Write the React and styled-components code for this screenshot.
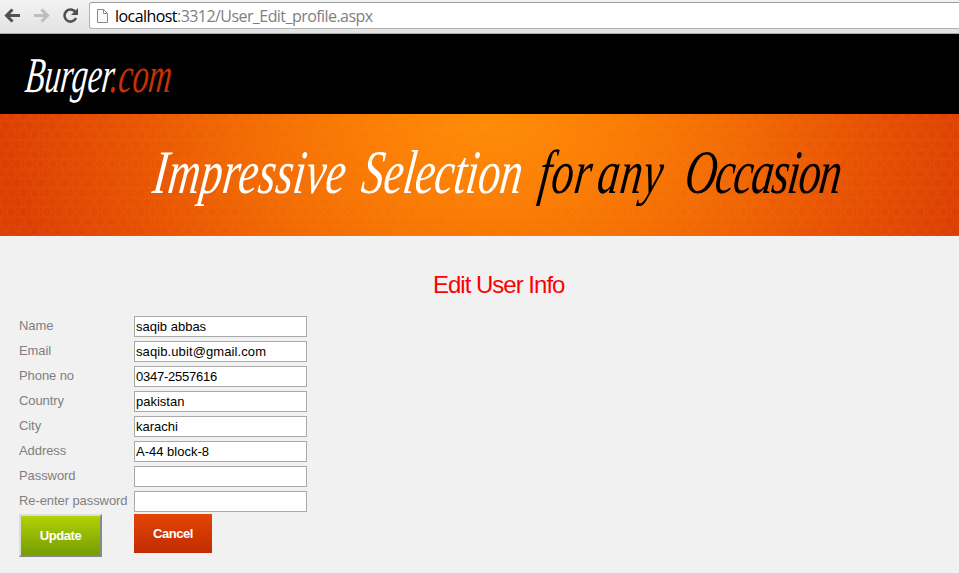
import React from "react";
import styled, { createGlobalStyle } from "styled-components";

const Global = createGlobalStyle`
  * { box-sizing: border-box; }
  body { margin: 0; background: #f1f1f1; overflow: hidden; font-family: "Liberation Sans", Arial, sans-serif; }
`;

const Page = styled.div`
  display: flex;
  flex-direction: column;
  height: 573px;
  overflow: hidden;
`;

const Toolbar = styled.div`
  display: flex;
  align-items: flex-start;
  height: 34px;
  padding-top: 2px;
  background: linear-gradient(#f3f3f3, #e2e2e2);
  border-bottom: 1px solid #a9a9a9;
`;

const NavIcons = styled.svg`
  flex: none;
  width: 89px;
  height: 28px;
`;

const AddressBar = styled.div`
  flex: 1;
  display: flex;
  align-items: center;
  height: 27px;
  padding-left: 6px;
  background: #fff;
  border: 1px solid #b2b2b2;
  border-top-color: #9d9d9d;
  border-right: 0;
  border-radius: 3px 0 0 3px;
  font: 16px "Open Sans", sans-serif;
  color: #808080;
`;

const PageIcon = styled.svg`
  width: 13px;
  height: 16px;
  margin-right: 6px;
`;

const Url = styled.span`
  white-space: nowrap;
  letter-spacing: -0.56px;
  line-height: 22px;
`;

const Host = styled.span`
  color: #000;
`;

const Header = styled.header`
  height: 80px;
  flex: none;
  background: #000;
  padding: 11px 0 0 26px;
`;

const Logo = styled.div`
  width: max-content;
  font: italic 50px/60px "Liberation Serif", serif;
  color: #fff;
  white-space: nowrap;
  transform: scaleX(0.635) skewX(-10deg);
  transform-origin: left;
`;

const LogoSuffix = styled.span`
  color: #c93003;
`;

const Banner = styled.section`
  position: relative;
  flex: none;
  height: 122px;
  padding: 23px 0 0 154px;
  background: radial-gradient(ellipse 490px 360px at 490px 0, #ff8c07 0%, #fb7d05 25%, #f26a04 50%, #e75203 75%, #dc3e03 100%);
`;

const Pattern = styled.svg`
  position: absolute;
  inset: 0;
  width: 100%;
  height: 100%;
`;

const Slogan = styled.h1`
  position: relative;
  display: grid;
  grid-template-columns: 294px 249px 83px 123px 240px;
  width: max-content;
  margin: 0;
  font: italic 62px/70px "Liberation Serif", serif;
  transform: scaleX(0.71);
  transform-origin: left;
`;

const Word = styled.span`
  color: ${(p) => (p.$dark ? "#000" : "#fff")};
  letter-spacing: ${(p) => p.$tracking || 0}px;
  transform: skewX(-10deg);
`;

const Title = styled.h2`
  margin: 32px 0 14px 433px;
  font-size: 24px;
  font-weight: 400;
  line-height: 34px;
  letter-spacing: -1px;
  color: #f00;
`;

const Form = styled.div`
  margin-left: 19px;
  width: 288px;
`;

const Row = styled.label`
  display: grid;
  grid-template-columns: 115px 173px;
  height: 25px;
  font-size: 13px;
  line-height: 19px;
  letter-spacing: -0.08px;
  color: #808080;
  white-space: nowrap;
`;

const Field = styled.input`
  width: 173px;
  height: 21px;
  padding: 1px;
  border: 1px solid #a9a9a9;
  border-radius: 0;
  background: #fff;
  color: #000;
  font: 13px "Liberation Sans", Arial, sans-serif;
  letter-spacing: ${(p) => p.$tracking || 0}px;
  outline: 0;
`;

const Actions = styled.div`
  display: grid;
  grid-template-columns: 115px 173px;
  align-items: start;
  margin-top: -2px;
`;

const Button = styled.button`
  width: ${(p) => (p.$raised ? "83px" : "78px")};
  height: ${(p) => (p.$raised ? "43px" : "39px")};
  padding: 0;
  border: ${(p) => (p.$raised ? "2px solid" : "0")};
  border-color: #ddd #888 #888 #ddd;
  background: ${(p) => (p.$raised ? "linear-gradient(#b1d205, #769d02)" : "linear-gradient(#e44503, #c02c02)")};
  color: #fff;
  font: bold 13px "Liberation Sans", Arial, sans-serif;
  letter-spacing: -0.45px;
`;

const fields = [
  ["Name", "saqib abbas"],
  ["Email", "saqib.ubit@gmail.com", 0.1],
  ["Phone no", "0347-2557616", -0.25],
  ["Country", "pakistan"],
  ["City", "karachi"],
  ["Address", "A-44 block-8"],
  ["Password", ""],
  ["Re-enter password", ""],
];

export default function App() {
  return (
    <Page>
      <Global />
      <Toolbar>
        <NavIcons viewBox="0 2 89 28" fill="none" strokeWidth="3">
          <path d="M20 15.500H7M12.500 9.500L6.500 15.500L12.500 21.500" stroke="#505050" />
          <path d="M34 15.500H47M41.500 9.500L47.500 15.500L41.500 21.500" stroke="#bdbdbd" />
          <path d="M75.500 12.200A6 6 0 1 0 76 18" stroke="#505050" strokeWidth="2.600" />
          <path d="M78 8V15H71Z" fill="#505050" />
        </NavIcons>
        <AddressBar>
          <PageIcon viewBox="0 0 13 16" fill="#fafafa" stroke="#8b8b8b">
            <path d="M1.500 1.500H7.500L11.500 5.500V14.500H1.500Z M7.500 1.500V5.500H11.500" />
          </PageIcon>
          <Url><Host>localhost</Host>:3312/User_Edit_profile.aspx</Url>
        </AddressBar>
      </Toolbar>
      <Header>
        <Logo>Burger<LogoSuffix>.com</LogoSuffix></Logo>
      </Header>
      <Banner>
        <Pattern aria-hidden="true">
          <defs>
            <pattern id="honeycomb" x="448" y="2" width="11.8" height="19.2" patternUnits="userSpaceOnUse">
              <g fill="none" stroke="#ffae24" strokeOpacity=".11">
                <circle cx="5.900" cy="9.600" r="4.700" />
                <circle cx="0" cy="0" r="4.700" />
                <circle cx="11.800" cy="0" r="4.700" />
                <circle cx="0" cy="19.200" r="4.700" />
                <circle cx="11.800" cy="19.200" r="4.700" />
              </g>
            </pattern>
          </defs>
          <rect width="100%" height="100%" fill="url(#honeycomb)" />
        </Pattern>
        <Slogan>
          <Word $tracking={0.5}>Impressive</Word>
          <Word $tracking={-0.2}>Selection</Word>
          <Word $dark $tracking={1}>for</Word>
          <Word $dark $tracking={1}>any</Word>
          <Word $dark $tracking={-2}>Occasion</Word>
        </Slogan>
      </Banner>
      <Title>Edit User Info</Title>
      <Form>
        {fields.map(([label, value, tracking]) => (
          <Row key={label}>
            {label}
            <Field type={value ? "text" : "password"} defaultValue={value} $tracking={tracking} />
          </Row>
        ))}
        <Actions>
          <Button $raised>Update</Button>
          <Button>Cancel</Button>
        </Actions>
      </Form>
    </Page>
  );
}
